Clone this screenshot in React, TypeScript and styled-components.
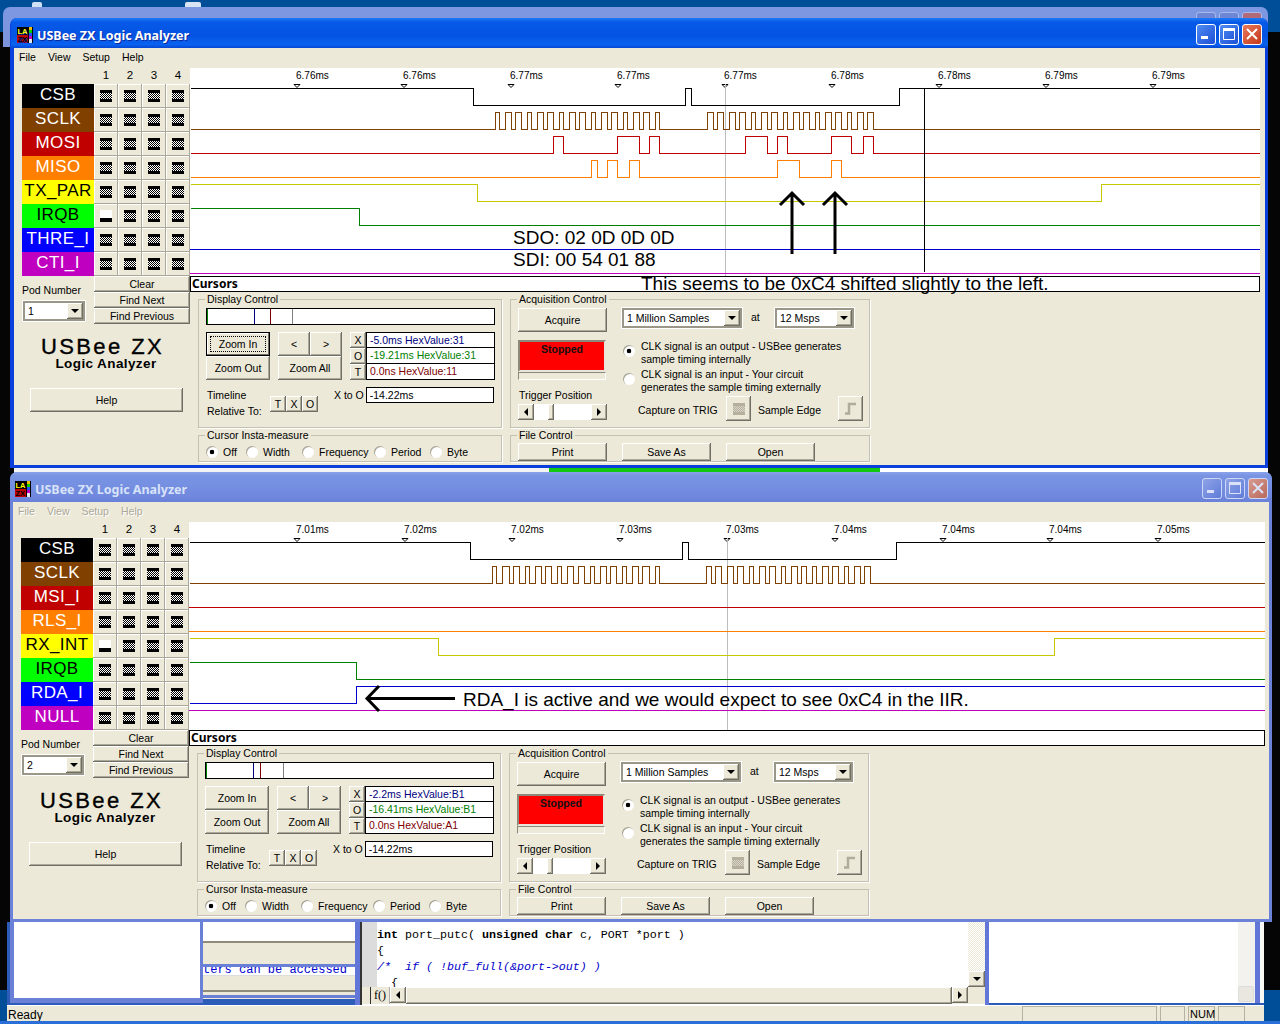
import React from "react";
import styled, { createGlobalStyle, css } from "styled-components";

const Global = createGlobalStyle`
  html, body { margin: 0; padding: 0; background: #004e98; overflow: hidden; }
  #root { width: 1280px; height: 1024px; }
  * { box-sizing: border-box; }
  button { font: inherit; color: inherit; padding: 0; margin: 0; }
`;

const UI = `"Liberation Sans", Arial, sans-serif`;
const TITLE = `"Noto Sans", "Liberation Sans", sans-serif`;
const beige = "#ece9d8";

const Desktop = styled.div`
  position: relative; width: 1280px; height: 1024px; overflow: hidden;
  background: #004e98; font: 10.5px/14px ${UI}; color: #000;
`;
const DeskIcon = styled.div<{ $x: number; $w: number; $c: string }>`
  position: absolute; top: 2px; left: ${p => p.$x}px; width: ${p => p.$w}px; height: 5px;
  background: ${p => p.$c}; border-radius: 2px 2px 0 0;
`;
const BlackScreen = styled.div`
  position: absolute; left: 0; top: 32px; width: 1280px; height: 958px; background: #050505;
`;
const BackTitle = styled.div`
  position: absolute; left: 3px; top: 7px; width: 1265px; height: 40px; border-radius: 7px 7px 0 0;
  background: linear-gradient(#7d98e2, #7b94dc); display: flex; justify-content: flex-end; gap: 3px; padding: 5px 6px 0 0;
`;
const BackCap = styled.div<{ $red?: boolean }>`
  width: 20px; height: 20px; border-radius: 3px; border: 1px solid #a9b8ea;
  background: ${p => (p.$red ? "#b06a78" : "#6d86d6")};
`;
const BackApp = styled.div`
  position: absolute; left: 7px; top: 922px; width: 1257px; height: 99px; display: flex; flex-direction: column;
`;
const PaneRow = styled.div`
  height: 83px; display: flex; padding-left: 3px; background: #2c5bb8;
`;
const ToolWindow = styled.div`
  width: 193px; height: 81px; background: #fff; border: solid #6a7fd6; border-width: 0 3px 5px 4px;
`;
const MidPane = styled.div`
  width: 152px; height: 77px; display: flex; flex-direction: column; background: ${beige};
`;
const MidWhite = styled.div`
  height: 21px; background: #fff; border-bottom: 2px solid #8f8b78;
`;
const MidBeige = styled.div<{ $h: number }>`
  height: ${p => p.$h}px; background: ${beige};
`;
const MidBlue = styled.div`
  height: 3px; background: #6a7fd6;
`;
const MidText = styled.div`
  height: 9px; background: #fff; color: #0000d0; font: 12px/6px "Liberation Mono", monospace; white-space: nowrap; overflow: hidden; border-bottom: 1px solid #ddd;
`;
const MidLine = styled.div`
  height: 2px; background: #8f8b78; margin-bottom: 3px;
`;
const Divider = styled.div<{ $w: number }>`
  width: ${p => p.$w}px; background: #6276d8; flex: none;
`;
const CodePane = styled.div`
  width: 625px; display: grid; grid-template-columns: 15px 1fr 17px; grid-template-rows: 65px 17px; border-left: 2px solid #333; background: #fff;
`;
const CodeGutter = styled.div`
  background: #dcdcdc;
`;
const CodeText = styled.pre`
  margin: 0; padding-top: 5px; font: 11.67px/16px "Liberation Mono", monospace; overflow: hidden; color: #000; background: #fff;
`;
const Kw = styled.b``;
const Cmt = styled.i`
  color: #0000c8;
`;
const VScroll = styled.div`
  display: flex; flex-direction: column; justify-content: flex-end;
  background: repeating-conic-gradient(${beige} 0 25%, #fff 0 50%) 0 0 / 2px 2px;
`;
const BottomBar = styled.div`
  grid-column: 1 / 4; display: flex; background: ${beige}; align-items: stretch; height: 17px;
`;
const FTab = styled.div`
  width: 20px; margin-left: 8px; font: 12px/17px "Liberation Serif", serif; text-align: center; border-left: 1px solid #333; border-right: 1px solid #aaa; background: ${beige};
`;
const RaisedBase = css`
  background: ${beige};
  box-shadow: inset -1px -1px 0 #716f64, inset 1px 1px 0 #fff, inset -2px -2px 0 #aca899;
`;
const ScrollBtn = styled.div<{ $w?: number; $h?: number }>`
  ${RaisedBase};
  width: ${p => p.$w ?? 16}px; height: ${p => p.$h ?? 16}px; flex: none; display: flex; align-items: center; justify-content: center;
`;
const HThumb = styled.div`
  ${RaisedBase}; flex: 1;
`;
const RightPane = styled.div`
  flex: 1; background: #fff; display: flex; justify-content: flex-end; height: 81px; align-items: stretch;
`;
const RightScroll = styled.div`
  width: 17px; background: #f4f2ee; display: flex; align-items: flex-end;
`;
const GhostBtn = styled.div`
  width: 16px; height: 16px; margin-bottom: 1px; background: #e9e7e0; border: 1px solid #ddd; border-radius: 2px;
`;
const RightBlue = styled.div`
  width: 5px; background: #6276d8;
`;
const RightEdge = styled.div`
  width: 4px; background: #f8f8f4;
`;
const StatusBar = styled.div`
  height: 16px; background: ${beige}; display: flex; align-items: stretch; padding-left: 1px; font: 12px/14px "Liberation Sans", sans-serif; border-top: 1px solid #fff;
`;
const StatusText = styled.div`
  width: 1014px; padding-top: 2px;
`;
const StatusPane = styled.div<{ $w: number }>`
  width: ${p => p.$w}px; margin-right: 3px; border: 1px solid #b5b2a2; border-bottom: 0; font-size: 11px; padding-left: 1px;
`;
const Taskbar = styled.div`
  position: absolute; left: 0; top: 1021px; width: 1280px; height: 3px; background: #2a6fd8;
`;
const GapStrip = styled.div`
  position: absolute; left: 14px; top: 466px; width: 1254px; height: 7px; display: flex; background: #fff;
`;
const GapPiece = styled.div<{ $w: number; $c: string }>`
  width: ${p => p.$w}px; background: ${p => p.$c}; flex: none;
`;

/* ---------- window ---------- */
const Win = styled.section<{ $top: number; $w: number; $off?: boolean }>`
  position: absolute; left: 10px; top: ${p => p.$top}px; width: ${p => p.$w}px; height: 450px;
  display: flex; flex-direction: column; border-radius: 7px 7px 0 0; overflow: hidden;
  background: ${p => (p.$off ? "#6c82d9" : "#0a3fdc")};
  padding: 0 3px 3px ${p => (p.$off ? 3 : 4)}px;
`;
const TitleBar = styled.header<{ $off?: boolean }>`
  height: 30px; flex: none; margin: 0 -3px; padding: 4px ${p => (p.$off ? 4 : 6)}px 0 ${p => (p.$off ? 5 : 6)}px; display: flex; align-items: center; gap: 4px;
  color: ${p => (p.$off ? "#d8e2f8" : "#fff")};
  font: 700 12.5px/16px ${TITLE};
  text-shadow: ${p => (p.$off ? "none" : "1px 1px 0 #0a2a9c")};
  background: ${p => p.$off
    ? "linear-gradient(#8ba3ea, #7a94e4 12%, #7089de 80%, #6880d8)"
    : "linear-gradient(#1f7bf5, #0659e8 14%, #0553e2 60%, #0a62f0 88%, #0547d4)"};
`;
const TitleText = styled.span`
  flex: 1; margin-top: 1px;
`;
const CapBtn = styled.div<{ $red?: boolean; $off?: boolean }>`
  width: 20px; height: 21px; margin-top: -2px; margin-left: -1px; border-radius: 3px; border: 1px solid ${p => (p.$off ? "#cdd6f4" : "#fff")};
  display: flex; align-items: center; justify-content: center;
  background: ${p => p.$red
    ? (p.$off ? "linear-gradient(135deg,#d79a8e,#b9695c)" : "linear-gradient(135deg,#e8795a,#c4371a)")
    : (p.$off ? "linear-gradient(135deg,#8fa3e8,#5f7bd8)" : "linear-gradient(135deg,#4f8cf2,#1c4fd6)")};
`;
const Client = styled.div`
  flex: 1; min-height: 0; background: ${beige}; display: flex; flex-direction: column; overflow: hidden;
`;
const MenuBar = styled.nav<{ $off?: boolean }>`
  height: 20px; flex: none; display: flex; align-items: center; padding: 0 0 2px 5px; gap: 12px;
  color: ${p => (p.$off ? "#aca899" : "#000")};
  text-shadow: ${p => (p.$off ? "1px 1px 0 #fff" : "none")};
`;
const Body = styled.div`
  display: flex; flex: 1; min-height: 0;
`;
const PodCol = styled.div`
  width: 176px; flex: none; padding-left: 8px;
`;
const NumHead = styled.div`
  height: 16px; display: grid; grid-template-columns: repeat(4, 24px); margin-left: 72px; text-align: center; line-height: 15px; font-size: 11.5px;
`;
const SigRow = styled.div`
  display: flex; height: 24px;
`;
const SigLabel = styled.div<{ $bg: string; $fg: string }>`
  width: 72px; height: 24px; background: ${p => p.$bg}; color: ${p => p.$fg}; text-align: center;
  font: 17px/21px "Liberation Sans", sans-serif; letter-spacing: 0.4px; white-space: nowrap; overflow: hidden;
`;
const TrigBtn = styled.div`
  background: ${beige}; box-shadow: inset -1px -1px 0 #aca899, inset 1px 1px 0 #fff;
  width: 24px; height: 24px; display: flex; align-items: center; justify-content: center;
`;
const TrigIcon = styled.div<{ $low?: boolean; $grey?: boolean }>`
  width: 12px; height: 12px;
  ${p => p.$low
    ? css`background: #fff; border-bottom: 4px solid #000;`
    : css`border-block: 3px solid ${p.$grey ? "#b5b09e" : "#000"}; background: repeating-conic-gradient(${p.$grey ? "#b5b09e" : "#000"} 0 25%, ${p.$grey ? "#d8d5c8" : "#fff"} 0 50%) 0 0 / 2px 2px;`}
`;
const PodFoot = styled.div`
  display: flex; height: 48px;
`;
const PodPick = styled.div`
  width: 72px; padding-top: 7px;
`;
const Stack = styled.div`
  display: flex; flex-direction: column;
`;
const Btn = styled.button<{ $w: number; $h: number; $def?: boolean }>`
  ${RaisedBase};
  width: ${p => p.$w}px; height: ${p => p.$h}px; border: 0; flex: none; display: block; text-align: center; line-height: ${p => p.$h - 2}px; white-space: nowrap; position: relative;
  ${p => p.$def && css`
    box-shadow: inset 0 0 0 1px #000, inset -2px -2px 0 #716f64, inset 2px 2px 0 #fff;
    &::after { content: ""; position: absolute; inset: 4px; border: 1px dotted #000; }
  `}
`;
const Combo = styled.div<{ $w: number; $ml?: number; $mt?: number }>`
  width: ${p => p.$w}px; height: 20px; margin: ${p => p.$mt ?? 0}px 0 0 ${p => p.$ml ?? 0}px; flex: none; background: #fff; display: flex; align-items: center; justify-content: space-between; padding: 2px 2px 2px 5px;
  box-shadow: inset 0 0 0 2px #9a9788, 0 0 0 1px #fff; line-height: 14px; white-space: nowrap;
`;
const Logo = styled.div`
  margin-top: 13px; text-align: center; padding-right: 7px; font: 22px/20px "Liberation Sans", sans-serif; letter-spacing: 2.4px; -webkit-text-stroke: 0.35px #000; white-space: nowrap;
`;
const LogoSub = styled.div`
  text-align: center; font: 700 13.5px/14px "Liberation Sans", sans-serif; letter-spacing: 0.4px;
`;
const HelpRow = styled.div`
  margin: 17px 0 0 8px;
`;
const Scope = styled.div`
  flex: 1; min-width: 0;
`;
const ChartSvg = styled.svg`
  display: block; background: #fff; font-family: ${UI};
`;
const CursorBar = styled.div<{ $w: number }>`
  position: relative; width: ${p => p.$w}px; height: 16px; background: #fff; border: 1px solid #000; font: 700 12px/14px ${TITLE}; padding-left: 1px; white-space: nowrap;
`;
const CursorNote = styled.span`
  position: absolute; left: 450px; top: -2px; font: 400 19px/18px "Liberation Sans", sans-serif;
`;
const Panels = styled.div`
  display: grid; grid-template-columns: 304px 360px; grid-template-rows: 136px auto; column-gap: 8px; margin-left: 8px;
`;
const Group = styled.fieldset`
  margin: 0; padding: 2px 7px 0; border: 1px solid #c4c1b2; min-width: 0; box-shadow: 1px 1px 0 #fff;
  & > legend { padding: 0 2px; margin-left: -1px; font: 10.5px/14px ${UI}; }
`;
const Strip = styled.div`
  position: relative; height: 17px; width: 289px; background: #fff; border: 1px solid #000;
`;
const StripMark = styled.i<{ $x: number; $c: string }>`
  position: absolute; top: 0; bottom: 0; left: ${p => p.$x}px; width: 1px; background: ${p => p.$c};
`;
const CtrlRow = styled.div`
  display: flex; gap: 8px; margin-top: 7px;
`;
const Inline = styled.div`
  display: flex;
`;
const CurCol = styled.div`
  display: flex; flex-direction: column;
`;
const CurLine = styled.div`
  display: flex; height: 16px;
`;
const ValueBox = styled.div<{ $c?: string; $first?: boolean; $w: number }>`
  width: ${p => p.$w}px; height: 16px; border: 1px solid #000; border-top-width: ${p => (p.$first ? 1 : 0)}px; background: #fff; color: ${p => p.$c ?? "#000"}; padding-left: 3px; line-height: ${p => (p.$first ? 14 : 15)}px; white-space: nowrap; overflow: hidden;
`;
const TimeRow = styled.div`
  display: flex; margin-top: 7px;
`;
const TimeLabel = styled.div`
  width: 64px; line-height: 16px; padding-left: 1px; white-space: nowrap; flex: none;
`;
const TriBtns = styled.div`
  display: flex; margin-top: 9px; height: 16px;
`;
const XTo = styled.div`
  width: 48px; text-align: right; padding-right: 2px; line-height: 16px; white-space: nowrap;
`;
const RadioRow = styled.div`
  display: flex; margin-top: 1px;
`;
const RadioItem = styled.div<{ $w: number }>`
  width: ${p => p.$w}px; display: flex; gap: 5px; align-items: center; white-space: nowrap;
`;
const Radio = styled.i<{ $on?: boolean }>`
  width: 12px; height: 12px; flex: none; border-radius: 50%; display: block;
  background: ${p => (p.$on ? "radial-gradient(circle, #000 0 2px, #fff 2.6px)" : "#fff")};
  box-shadow: inset 1px 1px 0 #a5a291;
`;
const AcqGrid = styled.div`
  display: grid; grid-template-columns: 89px 1fr; column-gap: 15px;
`;
const StopBox = styled.div`
  margin-top: 8px; width: 88px; height: 32px; background: #ff0000; border: 2px solid #8c897a; border-bottom-color: #e8e6da; border-right-color: #e8e6da; text-align: center; font-weight: 700; line-height: 14px; color: #111;
`;
const StopBar = styled.div`
  width: 88px; height: 8px; border: 1px solid #8c897a; border-bottom-color: #fff; border-right-color: #fff;
`;
const TrigLabel = styled.div`
  margin-top: 7px; line-height: 16px; padding-left: 1px; white-space: nowrap;
`;
const Slider = styled.div`
  display: flex; width: 89px; height: 16px; margin-top: 1px; background: #fff;
`;
const SliderGap = styled.div<{ $w: number }>`
  width: ${p => p.$w}px;
`;
const AcqRight = styled.div`
  display: flex; flex-direction: column;
`;
const ComboRow = styled.div`
  display: flex; align-items: center; height: 20px; margin-bottom: 12px;
`;
const AtText = styled.span`
  width: 33px; padding-left: 9px; margin-top: -3px;
`;
const ClkOption = styled.div`
  display: flex; gap: 6px; height: 28px; line-height: 13px; white-space: nowrap; padding-left: 1px;
  & > i { margin-top: 5px; }
`;
const TrigRow = styled.div`
  display: flex; align-items: center; padding-left: 16px; white-space: nowrap;
`;
const TrigCap = styled.span<{ $w: number }>`
  width: ${p => p.$w}px; flex: none; padding-top: 3px;
`;
const SqBtn = styled.div`
  ${RaisedBase}; width: 25px; height: 25px; flex: none; margin-right: 7px; display: flex; align-items: center; justify-content: center;
`;
const FileRow = styled.div`
  display: flex; gap: 15px; margin-top: -1px;
`;

const Tri = ({ d }: { d: "l" | "r" | "d" }) => (
  <svg width="8" height="8" viewBox="0 0 8 8">
    <path fill="#000" d={d === "d" ? "M0 2H8L4 6Z" : d === "l" ? "M6 0V8L2 4Z" : "M2 0V8L6 4Z"} />
  </svg>
);

const AppIcon = () => (
  <svg width="16" height="16" viewBox="0 0 16 16" style={{ flex: "none" }}>
    <rect width="16" height="16" fill="#000" />
    <rect x="0" y="8" width="11" height="8" fill="#c00000" />
    <text x="0.5" y="7" fontSize="7.5" fontWeight="700" fontFamily="Liberation Sans" fill="#ff0">LA</text>
    <text x="0.5" y="15" fontSize="7.5" fontWeight="700" fontFamily="Liberation Sans" fill="#000">ZX</text>
    <rect x="12" y="0" width="3" height="3" fill="#f0c000" />
    <rect x="12" y="3" width="3" height="3" fill="#00d000" />
    <rect x="12" y="6" width="3" height="3" fill="#2050ff" />
    <rect x="12" y="9" width="3" height="3" fill="#c000c0" />
    <rect x="12" y="12" width="3" height="4" fill="#e8e8e8" />
  </svg>
);

const Caps = ({ off }: { off?: boolean }) => {
  const s = off ? "#dbe2f8" : "#fff";
  return (
    <>
      <CapBtn $off={off}><svg width="14" height="14" viewBox="0 0 14 14"><rect x="2" y="9" width="7" height="3" fill={s} /></svg></CapBtn>
      <CapBtn $off={off}><svg width="14" height="14" viewBox="0 0 14 14"><path fill="none" stroke={s} d="M1.5 1.5H12.5V12.5H1.5Z" /><rect x="1" y="1" width="12" height="3" fill={s} /></svg></CapBtn>
      <CapBtn $red $off={off}><svg width="14" height="14" viewBox="0 0 14 14"><path stroke={s} strokeWidth="2" d="M2 2L12 12M12 2L2 12" /></svg></CapBtn>
    </>
  );
};

/* ---------- waveforms ---------- */
const px = (v: number) => Math.round(v) + 0.5;
const stepPath = (x0: number, x1: number, start: number, other: number, edges: number[]) => {
  let d = `M${px(x0)} ${start}`;
  let cur = start;
  edges.forEach(e => {
    cur = cur === start ? other : start;
    d += `H${px(e)}V${cur}`;
  });
  return d + `H${x1}`;
};
const A = [76, 88, 106, 124, 136, 154, 172, 184, 202, 220, 232, 250, 268, 280, 298, 316, 328, 346, 364, 376, 394, 412, 424, 442, 460, 472, 490, 508, 520, 538, 556, 568];
const B = [67, 85, 97, 115, 133, 151, 163, 181, 199, 211, 229, 247, 259, 277, 295, 307, 325, 343, 355, 373, 391, 403, 421, 439, 451, 469, 487, 499, 517, 535, 547, 565];
const at = (o: number, l: number[]) => l.map(e => o + e / 3);
const stretch = (o: number, l: number[], k: number) => l.map(e => o + ((e - l[0]) / 3) * k);

type Trace = { c: string; d: string };
type WinCfg = {
  top: number; w: number; off?: boolean; chartW: number; viewX: number; viewY: number; barW: number;
  pods: [string, string, string][]; lowRow: number; pod: string;
  ticks: [number, string][]; traces: Trace[]; greyX: number;
  marks: [number, string][]; vals: string[]; def?: boolean; note?: string;
  extras: React.ReactNode;
};

const Up = ({ x }: { x: number }) => (
  <path fill="none" stroke="#000" strokeWidth="3" d={`M${x} 254V193M${x - 12} 205L${x} 193L${x + 12} 205`} />
);

const W1: WinCfg = {
  top: 18, w: 1258, chartW: 1070, viewX: 190, viewY: 68, barW: 1070, def: true,
  pods: [["CSB", "#000", "#fff"], ["SCLK", "#804000", "#fff"], ["MOSI", "#c00000", "#fff"], ["MISO", "#ff8000", "#fff"], ["TX_PAR", "#ffff00", "#000"], ["IRQB", "#00ff00", "#000"], ["THRE_I", "#0000ff", "#fff"], ["CTI_I", "#c000c0", "#fff"]],
  lowRow: 5, pod: "1", greyX: 725.5,
  ticks: [[297, "6.76ms"], [404, "6.76ms"], [511, "6.77ms"], [618, "6.77ms"], [725, "6.77ms"], [832, "6.78ms"], [939, "6.78ms"], [1046, "6.79ms"], [1153, "6.79ms"]],
  traces: [
    { c: "#000", d: stepPath(190, 1260, 88.5, 105.5, [473, 685, 691, 899]) },
    { c: "#804000", d: stepPath(190, 1260, 129.5, 112.5, [...at(470, A), ...at(685, B)]) },
    { c: "#c00000", d: stepPath(190, 1260, 153.5, 136.5, at(470, [250, 280, 442, 508, 538, 568]).concat(at(685, [181, 247, 277, 307, 439, 499, 535, 565]))) },
    { c: "#ff8000", d: stepPath(190, 1260, 177.5, 160.5, at(470, [364, 382, 412, 442, 478, 508]).concat(at(685, [277, 343, 439, 469]))) },
    { c: "#c8c800", d: stepPath(190, 1260, 184.5, 201.5, [477, 1101]) },
    { c: "#008000", d: stepPath(190, 1260, 208.5, 225.5, [359]) },
    { c: "#0000d0", d: "M190 249.5H1260" },
    { c: "#c000c0", d: "M190 273.5H1260" },
  ],
  marks: [[0, "#008000"], [47, "#000080"], [63, "#800000"], [85, "#808080"]],
  vals: ["-5.0ms HexValue:31", "-19.21ms HexValue:31", "0.0ns HexValue:11"],
  note: "This seems to be 0xC4 shifted slightly to the left.",
  extras: (
    <>
      <path stroke="#000" d="M924.5 88V272" />
      <Up x={792} />
      <Up x={835} />
      <text x="513" y="244" fontSize="19" fontFamily="Liberation Sans">SDO: 02 0D 0D 0D</text>
      <text x="513" y="266" fontSize="19" fontFamily="Liberation Sans">SDI: 00 54 01 88</text>
    </>
  ),
};

const W2: WinCfg = {
  top: 472, w: 1262, off: true, chartW: 1076, viewX: 189, viewY: 522, barW: 1076,
  pods: [["CSB", "#000", "#fff"], ["SCLK", "#804000", "#fff"], ["MSI_I", "#c00000", "#fff"], ["RLS_I", "#ff8000", "#fff"], ["RX_INT", "#ffff00", "#000"], ["IRQB", "#00ff00", "#000"], ["RDA_I", "#0000ff", "#fff"], ["NULL", "#c000c0", "#fff"]],
  lowRow: 4, pod: "2", greyX: 727.5,
  ticks: [[297, "7.01ms"], [405, "7.02ms"], [512, "7.02ms"], [620, "7.03ms"], [727, "7.03ms"], [835, "7.04ms"], [943, "7.04ms"], [1050, "7.04ms"], [1158, "7.05ms"]],
  traces: [
    { c: "#000", d: stepPath(189, 1265, 542.5, 559.5, [470, 682, 688, 896]) },
    { c: "#804000", d: stepPath(189, 1265, 583.5, 566.5, [...stretch(492.3, A, 1.0146), ...stretch(705.5, B, 0.99)]) },
    { c: "#c00000", d: "M189 607.5H1265" },
    { c: "#ff8000", d: "M189 631.5H1265" },
    { c: "#c8c800", d: stepPath(189, 1265, 638.5, 655.5, [438, 1054]) },
    { c: "#008000", d: stepPath(189, 1265, 662.5, 679.5, [356]) },
    { c: "#0000d0", d: stepPath(189, 1265, 703.5, 686.5, [356]) },
    { c: "#c000c0", d: "M189 710.5H1265" },
  ],
  marks: [[0, "#008000"], [47, "#000080"], [54, "#800000"], [77, "#808080"]],
  vals: ["-2.2ms HexValue:B1", "-16.41ms HexValue:B1", "0.0ns HexValue:A1"],
  extras: (
    <>
      <path fill="none" stroke="#000" strokeWidth="3" d="M455 698.5H367M379 686L367 698.5L379 711" />
      <text x="463" y="706" fontSize="19" fontFamily="Liberation Sans">RDA_I is active and we would expect to see 0xC4 in the IIR.</text>
    </>
  ),
};

const Window = ({ c }: { c: WinCfg }) => (
  <Win $top={c.top} $w={c.w} $off={c.off}>
    <TitleBar $off={c.off}>
      <AppIcon />
      <TitleText>USBee ZX Logic Analyzer</TitleText>
      <Caps off={c.off} />
    </TitleBar>
    <Client>
      <MenuBar $off={c.off}>
        <span>File</span><span>View</span><span>Setup</span><span>Help</span>
      </MenuBar>
      <Body>
        <PodCol>
          <NumHead>{[1, 2, 3, 4].map(n => <span key={n}>{n}</span>)}</NumHead>
          {c.pods.map(([name, bg, fg], r) => (
            <SigRow key={name}>
              <SigLabel $bg={bg} $fg={fg}>{name}</SigLabel>
              {[0, 1, 2, 3].map(k => (
                <TrigBtn key={k}><TrigIcon $low={r === c.lowRow && k === 0} /></TrigBtn>
              ))}
            </SigRow>
          ))}
          <PodFoot>
            <PodPick>
              <div>Pod Number</div>
              <Combo $w={62} $ml={1} $mt={4}>
                {c.pod}
                <ScrollBtn><Tri d="d" /></ScrollBtn>
              </Combo>
            </PodPick>
            <Stack>
              <Btn $w={96} $h={16}>Clear</Btn>
              <Btn $w={96} $h={16}>Find Next</Btn>
              <Btn $w={96} $h={16}>Find Previous</Btn>
            </Stack>
          </PodFoot>
          <Logo>USBee ZX</Logo>
          <LogoSub>Logic Analyzer</LogoSub>
          <HelpRow><Btn $w={153} $h={24}>Help</Btn></HelpRow>
        </PodCol>
        <Scope>
          <ChartSvg width={c.chartW} height={208} viewBox={`${c.viewX} ${c.viewY} ${c.chartW} 208`}>
            {c.ticks.map(([x, t], i) => (
              <g key={i}>
                <text x={x - 1} y={c.viewY + 11} fontSize="10">{t}</text>
                <path d={`M${x - 3} ${c.viewY + 16.5}H${x + 3}L${x} ${c.viewY + 19.5}Z`} fill="#fff" stroke="#000" />
              </g>
            ))}
            <path stroke="#bdbdbd" d={`M${c.greyX} ${c.viewY + 16}V${c.viewY + 208}`} />
            <g fill="none" strokeWidth="1" shapeRendering="crispEdges">
              {c.traces.map((t, i) => <path key={i} d={t.d} stroke={t.c} />)}
            </g>
            {c.extras}
          </ChartSvg>
          <CursorBar $w={c.barW}>
            Cursors
            {c.note && <CursorNote>{c.note}</CursorNote>}
          </CursorBar>
          <Panels>
            <Group>
              <legend>Display Control</legend>
              <Strip>{c.marks.map(([x, col]) => <StripMark key={x} $x={x} $c={col} />)}</Strip>
              <CtrlRow>
                <Stack>
                  <Btn $w={64} $h={24} $def={c.def}>Zoom In</Btn>
                  <Btn $w={64} $h={24}>Zoom Out</Btn>
                </Stack>
                <Stack>
                  <Inline><Btn $w={32} $h={24}>&lt;</Btn><Btn $w={32} $h={24}>&gt;</Btn></Inline>
                  <Btn $w={64} $h={24}>Zoom All</Btn>
                </Stack>
                <CurCol>
                  {["X", "O", "T"].map((l, i) => (
                    <CurLine key={l}>
                      <Btn $w={16} $h={16}>{l}</Btn>
                      <ValueBox $w={129} $first={i === 0} $c={["#000080", "#008000", "#800000"][i]}>{c.vals[i]}</ValueBox>
                    </CurLine>
                  ))}
                </CurCol>
              </CtrlRow>
              <TimeRow>
                <TimeLabel>Timeline<br />Relative To:</TimeLabel>
                <TriBtns>
                  <Btn $w={16} $h={16}>T</Btn><Btn $w={16} $h={16}>X</Btn><Btn $w={16} $h={16}>O</Btn>
                </TriBtns>
                <XTo>X to O</XTo>
                <ValueBox $w={129} $first>-14.22ms</ValueBox>
              </TimeRow>
            </Group>
            <Group>
              <legend>Acquisition Control</legend>
              <AcqGrid>
                <Stack>
                  <Btn $w={89} $h={24}>Acquire</Btn>
                  <StopBox>Stopped</StopBox>
                  <StopBar />
                  <TrigLabel>Trigger Position</TrigLabel>
                  <Slider>
                    <ScrollBtn><Tri d="l" /></ScrollBtn>
                    <SliderGap $w={14} />
                    <ScrollBtn $w={6} />
                    <SliderGap $w={37} />
                    <ScrollBtn><Tri d="r" /></ScrollBtn>
                  </Slider>
                </Stack>
                <AcqRight>
                  <ComboRow>
                    <Combo $w={120}>1 Million Samples<ScrollBtn><Tri d="d" /></ScrollBtn></Combo>
                    <AtText>at</AtText>
                    <Combo $w={79}>12 Msps<ScrollBtn><Tri d="d" /></ScrollBtn></Combo>
                  </ComboRow>
                  <ClkOption><Radio $on /><div>CLK signal is an output - USBee generates<br />sample timing internally</div></ClkOption>
                  <ClkOption><Radio /><div>CLK signal is an input - Your circuit<br />generates the sample timing externally</div></ClkOption>
                  <TrigRow>
                    <TrigCap $w={88}>Capture on TRIG</TrigCap>
                    <SqBtn><TrigIcon $grey /></SqBtn>
                    <TrigCap $w={80}>Sample Edge</TrigCap>
                    <SqBtn>
                      <svg width="13" height="13" viewBox="0 0 13 13"><path fill="none" stroke="#b0ac9a" strokeWidth="2.5" d="M1 11.5H5V2H12" /></svg>
                    </SqBtn>
                  </TrigRow>
                </AcqRight>
              </AcqGrid>
            </Group>
            <Group>
              <legend>Cursor Insta-measure</legend>
              <RadioRow>
                <RadioItem $w={40}><Radio $on />Off</RadioItem>
                <RadioItem $w={56}><Radio />Width</RadioItem>
                <RadioItem $w={72}><Radio />Frequency</RadioItem>
                <RadioItem $w={56}><Radio />Period</RadioItem>
                <RadioItem $w={50}><Radio />Byte</RadioItem>
              </RadioRow>
            </Group>
            <Group>
              <legend>File Control</legend>
              <FileRow>
                <Btn $w={89} $h={18}>Print</Btn>
                <Btn $w={89} $h={18}>Save As</Btn>
                <Btn $w={89} $h={18}>Open</Btn>
              </FileRow>
            </Group>
          </Panels>
        </Scope>
      </Body>
    </Client>
  </Win>
);

export default function App() {
  return (
    <Desktop>
      <Global />
      <DeskIcon $x={32} $w={10} $c="#cfe0f5" />
      <DeskIcon $x={185} $w={16} $c="#d8e4f4" />
      <BlackScreen />
      <BackTitle>
        <BackCap /><BackCap /><BackCap $red />
      </BackTitle>
      <GapStrip>
        <GapPiece $w={535} $c="#f4f4f4" />
        <GapPiece $w={331} $c="#12c812" />
      </GapStrip>
      <BackApp>
        <PaneRow>
          <ToolWindow />
          <MidPane>
            <MidWhite />
            <MidBeige $h={21} />
            <MidBlue />
            <MidText>ters can be accessed r</MidText>
            <MidBeige $h={14} />
            <MidLine />
            <MidBlue />
          </MidPane>
          <Divider $w={5} />
          <CodePane>
            <CodeGutter />
            <CodeText><Kw>int</Kw> port_putc( <Kw>unsigned char</Kw> c, PORT *port ){"\n"}{"{"}{"\n"}<Cmt>/*  if ( !buf_full(&amp;port-&gt;out) )</Cmt>{"\n"}  {"{"}</CodeText>
            <VScroll><ScrollBtn $w={17}><Tri d="d" /></ScrollBtn></VScroll>
            <BottomBar>
              <FTab>f()</FTab>
              <ScrollBtn><Tri d="l" /></ScrollBtn>
              <HThumb />
              <ScrollBtn><Tri d="r" /></ScrollBtn>
              <GapPiece $w={17} $c={beige} />
            </BottomBar>
          </CodePane>
          <Divider $w={4} />
          <RightPane>
            <RightScroll><GhostBtn /></RightScroll>
            <RightBlue />
            <RightEdge />
          </RightPane>
        </PaneRow>
        <StatusBar>
          <StatusText>Ready</StatusText>
          <StatusPane $w={135} />
          <StatusPane $w={25} />
          <StatusPane $w={27}>NUM</StatusPane>
          <StatusPane $w={27} />
        </StatusBar>
      </BackApp>
      <Taskbar />
      <Window c={W1} />
      <Window c={W2} />
    </Desktop>
  );
}
